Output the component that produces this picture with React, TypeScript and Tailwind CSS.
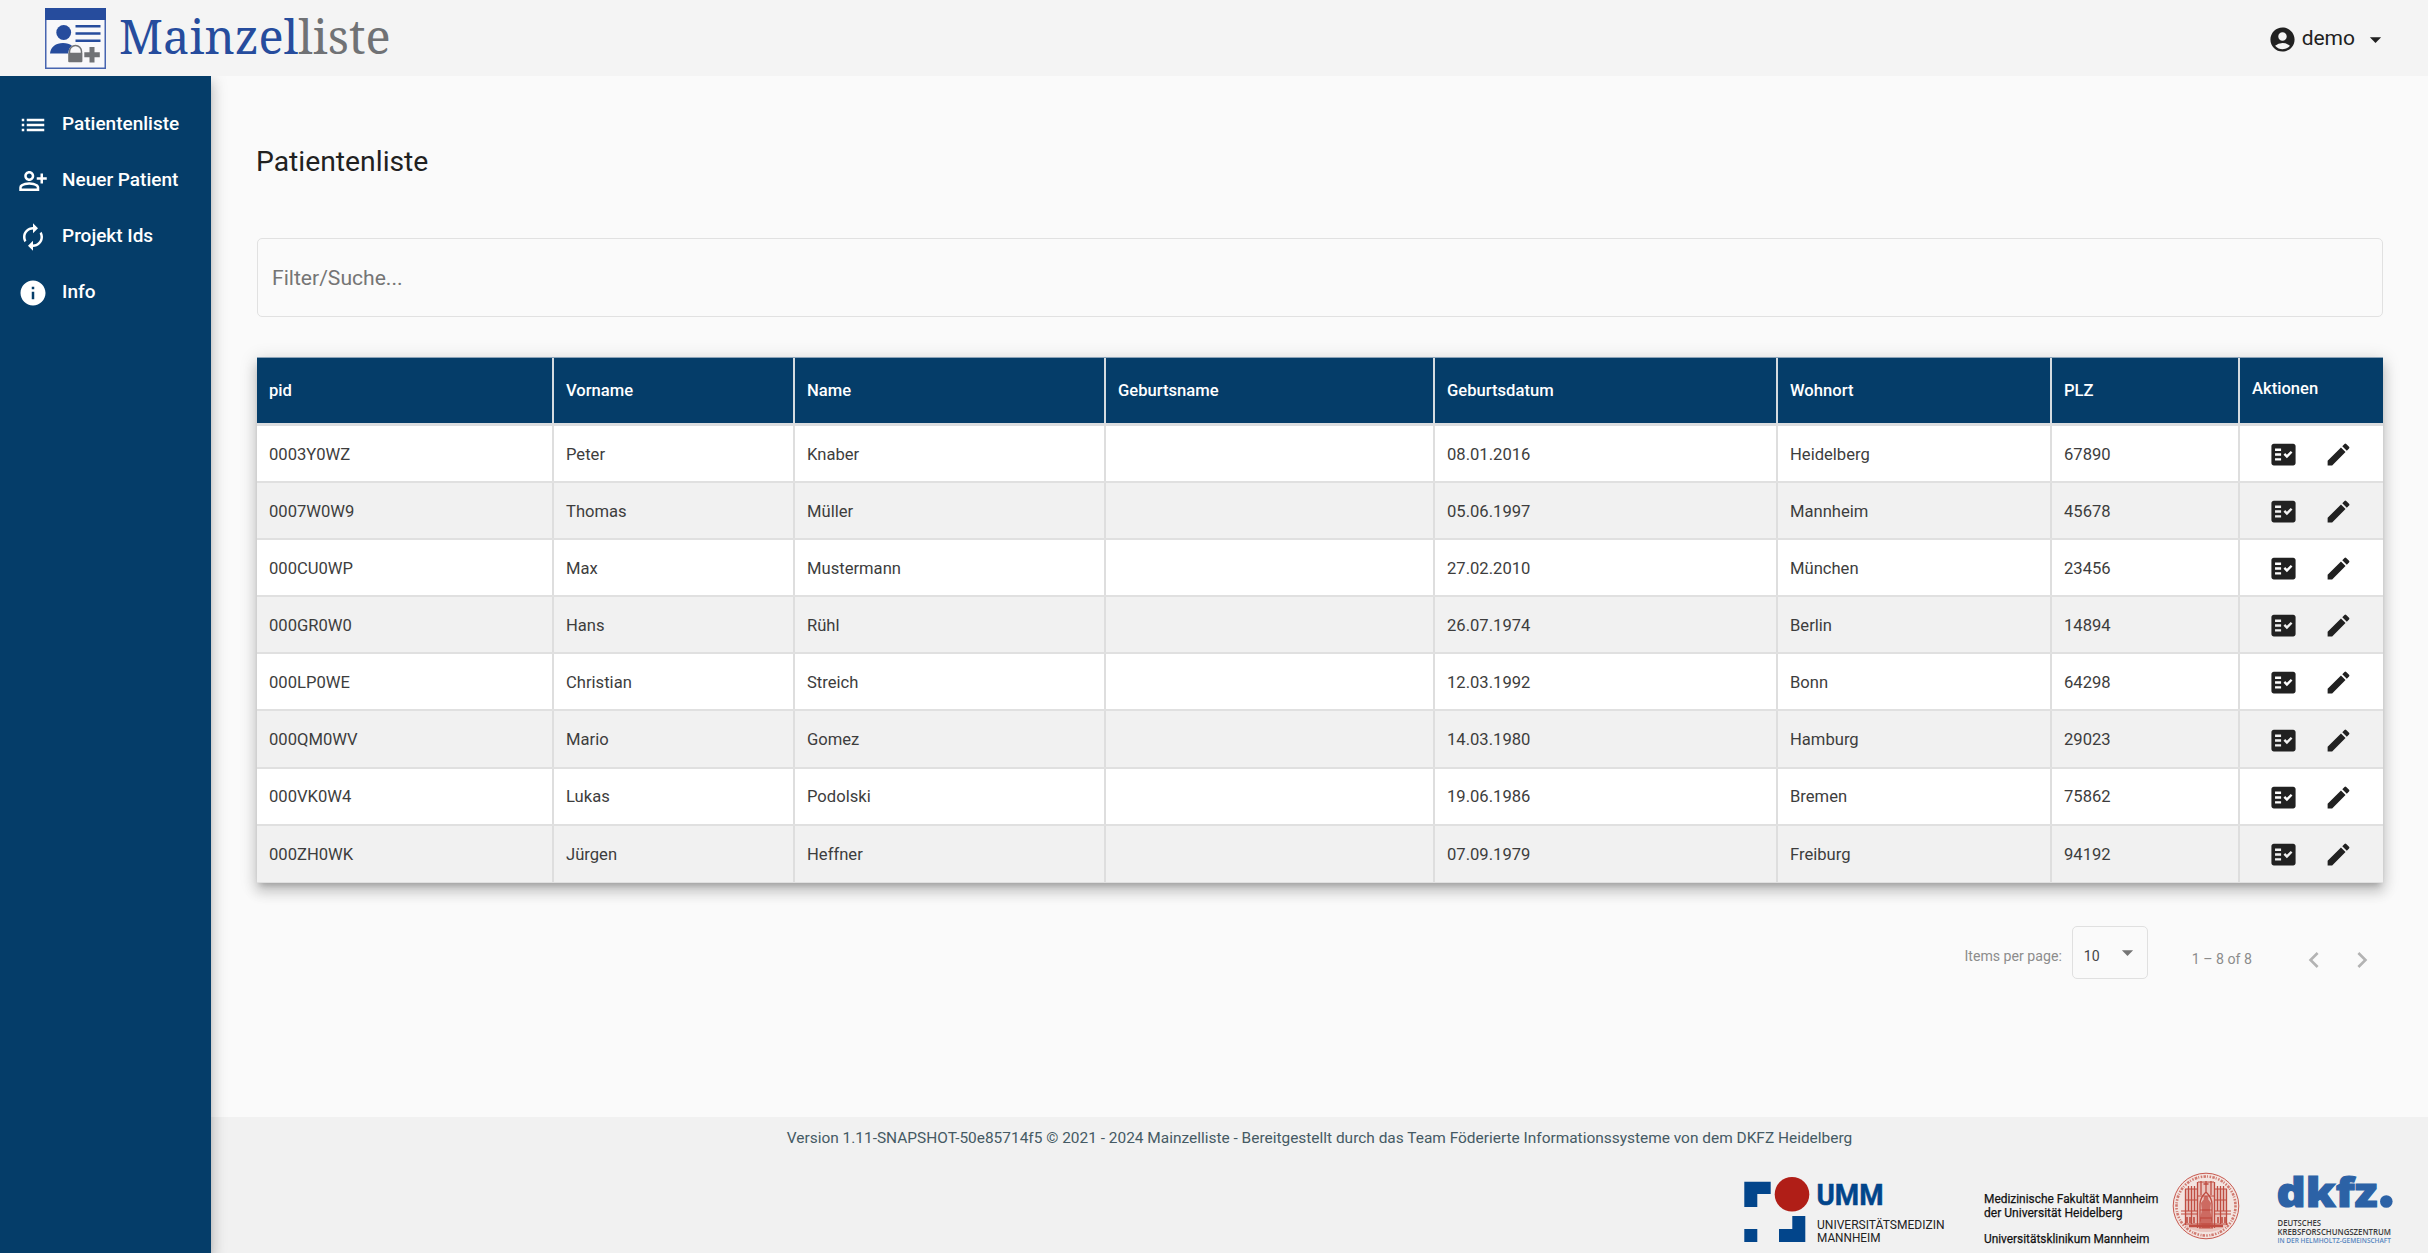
import React from 'react';
import {
  MdAccountCircle,
  MdArrowDropDown,
  MdAutorenew,
  MdChevronLeft,
  MdChevronRight,
  MdEdit,
  MdFactCheck,
  MdInfo,
  MdList,
  MdOutlinePersonAddAlt,
} from 'react-icons/md';

const navItems = [
  { label: 'Patientenliste', Icon: MdList },
  { label: 'Neuer Patient', Icon: MdOutlinePersonAddAlt },
  { label: 'Projekt Ids', Icon: MdAutorenew },
  { label: 'Info', Icon: MdInfo },
];

const columns = ['pid', 'Vorname', 'Name', 'Geburtsname', 'Geburtsdatum', 'Wohnort', 'PLZ'];

const patients = [
  ['0003Y0WZ', 'Peter', 'Knaber', '', '08.01.2016', 'Heidelberg', '67890'],
  ['0007W0W9', 'Thomas', 'Müller', '', '05.06.1997', 'Mannheim', '45678'],
  ['000CU0WP', 'Max', 'Mustermann', '', '27.02.2010', 'München', '23456'],
  ['000GR0W0', 'Hans', 'Rühl', '', '26.07.1974', 'Berlin', '14894'],
  ['000LP0WE', 'Christian', 'Streich', '', '12.03.1992', 'Bonn', '64298'],
  ['000QM0WV', 'Mario', 'Gomez', '', '14.03.1980', 'Hamburg', '29023'],
  ['000VK0W4', 'Lukas', 'Podolski', '', '19.06.1986', 'Bremen', '75862'],
  ['000ZH0WK', 'Jürgen', 'Heffner', '', '07.09.1979', 'Freiburg', '94192'],
];

const gridCols = 'grid grid-cols-[297px_241px_311px_329px_343px_274px_188px_143px]';

function LogoMark() {
  return (
    <svg viewBox="0 0 61 61" className="h-[61px] w-[61px]" aria-hidden="true">
      <rect x="0.75" y="0.75" width="59.5" height="59.5" fill="#f8f8fa" stroke="#4765b0" strokeWidth="1.5" />
      <rect width="61" height="12" fill="#264c9d" />
      <circle cx="18.7" cy="24.5" r="7.4" fill="#264c9d" />
      <path d="M5 45.5c.6-6.500 6-10.500 13-10.500 4 0 6.500 1 9 2.800-2.500 1.700-3.500 4-3.700 7.700z" fill="#264c9d" />
      <path d="M30.500 18.300h25M30.500 25.500h25M30.500 32.700h25" stroke="#264c9d" strokeWidth="2.500" />
      <path d="M24.500 45.500v-2a6 6 0 0 1 12 0v2" fill="none" stroke="#707275" strokeWidth="1.500" />
      <rect x="23.200" y="44.800" width="14.200" height="9.500" rx="1" fill="#707275" />
      <path d="M47 39v15.500M39.300 46.700h15.500" stroke="#707275" strokeWidth="5" />
    </svg>
  );
}

function UmmLogo() {
  return (
    <svg viewBox="0 0 206 70" className="h-[70px] w-[206px] shrink-0 overflow-visible" role="img" aria-label="UMM">
      <path d="M.3 6.700h26.400V19H13.300v13H.3zM.3 54h13v13H.3zM48.300 41h13v26H35V54h13.300z" fill="#02458b" />
      <circle cx="48" cy="19.300" r="17.300" fill="#b01e17" />
      <text x="72.500" y="30.300" fontSize="29" fontWeight="700" fill="#02458b" stroke="#02458b" strokeWidth="0.500" textLength="67" lengthAdjust="spacingAndGlyphs">UMM</text>
      <text x="73" y="54" fontSize="12.600" fill="#222" textLength="127.500" lengthAdjust="spacingAndGlyphs">UNIVERSITÄTSMEDIZIN</text>
      <text x="73" y="67" fontSize="12.600" fill="#222" textLength="63.500" lengthAdjust="spacingAndGlyphs">MANNHEIM</text>
    </svg>
  );
}

function FacultyText() {
  return (
    <svg viewBox="0 0 180 76" className="h-[76px] w-[180px] shrink-0 overflow-visible" role="img" aria-label="Fakultät">
      <g fontSize="13.2" fill="#111" stroke="#111" strokeWidth="0.250">
        <text x="0" y="27.500" textLength="174.500" lengthAdjust="spacingAndGlyphs">Medizinische Fakultät Mannheim</text>
        <text x="0" y="41.800" textLength="138.500" lengthAdjust="spacingAndGlyphs">der Universität Heidelberg</text>
        <text x="0" y="67.600" textLength="165.500" lengthAdjust="spacingAndGlyphs">Universitätsklinikum Mannheim</text>
      </g>
    </svg>
  );
}

function Seal() {
  return (
    <svg viewBox="0 0 68 68" className="h-[68px] w-[68px] shrink-0" aria-hidden="true">
      <circle cx="34" cy="34" r="32.800" fill="#f3e4e0" stroke="#c2473c" strokeWidth="0.900" />
      <circle cx="34" cy="34" r="29.500" fill="none" stroke="#d07a70" strokeWidth="2.600" strokeDasharray="1.500 1.300 2.500 1 1 1.600" />
      <path d="M13 17h13v-7h16v7h13v37q-9 6-21 6t-21-6z" fill="#eac4be" />
      <g stroke="#bf4c41" fill="none">
        <path d="M13.500 17v36M16.500 14v25M19.500 14v38M22.500 14v25M25.500 10v46M29 9v14M39 9v14M42.500 10v46M45.500 14v25M48.500 14v38M51.500 14v25M54.500 17v36" strokeWidth="1.300" />
        <path d="M13 17h13M42 17h13M26 10h16M13 28h13M42 28h13M9 39h17M42 39h17M9 42h17M42 42h17M12 52h44M26 24h16M27 56h14" strokeWidth="1.200" />
        <path d="M15 45v6M18 45v6M22 45v6M46 45v6M50 45v6M53 45v6" strokeWidth="1.600" />
        <path d="M28 56V32c0-5 2-8 6-12 4 4 6 7 6 12v24M34 9v11M31.500 12h5" strokeWidth="1.300" />
        <path d="M28 38h12M28 46h12" strokeWidth="1" />
      </g>
      <path d="M34 24c2 0 2.700 1.500 2.200 3.200l2.800 3.800-.8 7 1.800 10-2 8h-8l-2-8 1.800-10-.8-7 2.800-3.800C31.300 25.500 32 24 34 24z" fill="#bd3a2f" fillOpacity="0.650" />
      <path d="M17 54h34" stroke="#bf4c41" strokeWidth="2.500" />
    </svg>
  );
}

function DkfzLogo() {
  return (
    <svg viewBox="0 0 120 82" className="h-[82px] w-[120px] shrink-0 overflow-visible font-['Open_Sans',sans-serif]" role="img" aria-label="dkfz">
      <text x="-0.500" y="34.200" fontSize="41.500" fontWeight="800" fill="#2c62a6" stroke="#2c62a6" strokeWidth="1.200" textLength="101" lengthAdjust="spacingAndGlyphs">dkfz</text>
      <circle cx="109.300" cy="28.500" r="6.300" fill="#2c62a6" />
      <g fontSize="8.600" fontWeight="600">
        <text x="0.500" y="52.500" fill="#3c3c3c" textLength="43.500" lengthAdjust="spacingAndGlyphs">DEUTSCHES</text>
        <text x="0.500" y="61.500" fill="#3c3c3c" textLength="113.500" lengthAdjust="spacingAndGlyphs">KREBSFORSCHUNGSZENTRUM</text>
        <text x="0.500" y="69.800" fontSize="7.800" fill="#5585bf" textLength="113.500" lengthAdjust="spacingAndGlyphs">IN DER HELMHOLTZ-GEMEINSCHAFT</text>
      </g>
    </svg>
  );
}

function PatientTable() {
  return (
    <div
      role="table"
      className="w-[2126px] text-[16.6px] shadow-[0_5px_6px_-3px_rgba(0,0,0,0.2),0_9px_12px_1px_rgba(0,0,0,0.14),0_3px_16px_2px_rgba(0,0,0,0.12)]"
    >
      <div role="row" className={`${gridCols} h-[69px] border-t border-b-[3px] border-t-[#8ba3b8] border-b-[#dcdddf] bg-[#053d69] font-medium text-white`}>
        {columns.map((name) => (
          <div key={name} role="columnheader" className="flex items-center border-r-2 border-[#d5dbe0] pl-3 pt-0.5">
            {name}
          </div>
        ))}
        <div role="columnheader" className="flex items-center pb-[3px] pl-3">Aktionen</div>
      </div>
      {patients.map((row) => (
        <div
          key={row[0]}
          role="row"
          className={`${gridCols} h-[57.1px] border-b-2 border-[#e0e0e0] text-[#3d3d3d] last:border-b even:bg-white odd:bg-[#f1f1f1]`}
        >
          {row.map((value, i) => (
            <div key={i} role="cell" className="flex items-center border-r-2 border-[#dedede] pl-3 pt-[3px]">
              {value}
            </div>
          ))}
          <div role="cell" className="flex items-center gap-[26px] pl-[29px] pt-[2px] text-[#212121]">
            <MdFactCheck className="size-[29px]" />
            <MdEdit className="size-[29px]" />
          </div>
        </div>
      ))}
    </div>
  );
}

function Paginator() {
  return (
    <div className="mt-[43px] flex h-[53px] w-[2126px] items-start justify-end text-[14.15px] text-[#8c8c8c]">
      <span className="mr-[10px] mt-[20px] leading-5">Items per page:</span>
      <div className="flex h-[53px] w-[76px] items-center justify-between rounded-[5px] border border-[#e0e0e0] pl-[11px] pr-[6px] text-[#454545]">
        <span className="pt-[8px]">10</span>
        <MdArrowDropDown className="size-[27px] text-[#757575]" />
      </div>
      <span className="ml-[44px] mt-[23px] leading-5">1 – 8 of 8</span>
      <div className="ml-[46px] mt-[18px] flex gap-4 text-[#b3b3b3]">
        <MdChevronLeft className="size-8" />
        <MdChevronRight className="size-8" />
      </div>
      <div className="w-[5px]" />
    </div>
  );
}

export default function App() {
  return (
    <div className="flex h-[1253px] w-[2428px] flex-col overflow-hidden bg-[#fafafa] font-['Roboto',sans-serif] text-[#212121]">
      <header className="relative z-20 flex h-[76px] shrink-0 items-center bg-[#f4f4f4] pl-[45px]">
        <LogoMark />
        <span className="ml-[13px] whitespace-nowrap pb-1 font-['Noto_Serif',serif] text-[46.9px] leading-[60px] text-[#264c9d]">
          Mainzel<span className="text-[#707275]">liste</span>
        </span>
        <div className="ml-auto flex items-center pr-[39px]">
          <MdAccountCircle className="mt-[3px] size-[29px]" />
          <span className="ml-[5px] text-[21px] leading-7">demo</span>
          <MdArrowDropDown className="ml-[7px] mt-[3px] size-[27px]" />
        </div>
      </header>

      <div className="flex min-h-0 flex-1">
        <nav className="z-10 flex w-[211px] shrink-0 flex-col bg-[#053d69] pt-5 text-white shadow-[0_5px_6px_-3px_rgba(0,0,0,0.2),0_9px_12px_1px_rgba(0,0,0,0.14),0_3px_16px_2px_rgba(0,0,0,0.12)]">
          {navItems.map(({ label, Icon }) => (
            <a key={label} className="flex h-14 items-center pl-[18px]">
              <Icon className="mt-px size-[30px]" />
              <span className="ml-[14px] mt-px text-[19px] font-medium">{label}</span>
            </a>
          ))}
        </nav>

        <div className="flex min-w-0 flex-1 flex-col">
          <main className="flex flex-1 flex-col pl-[46px]">
            <h1 className="-ml-px mt-[68px] text-[28.3px] leading-9">Patientenliste</h1>
            <div className="mt-[58px] flex h-[79px] w-[2126px] items-center rounded-[5px] border border-[#e1e1e1] pl-[14px] text-[21.1px] text-[#757575]">
              <span>Filter/Suche...</span>
            </div>
            <div className="mt-[40px]">
              <PatientTable />
            </div>
            <Paginator />
          </main>

          <footer className="h-[136px] shrink-0 bg-[#f1f1f1]">
            <p className="pt-[11px] text-center text-[15.44px] leading-5 text-[#455a64]">
              Version 1.11-SNAPSHOT-50e85714f5 © 2021 - 2024 Mainzelliste - Bereitgestellt durch das Team Föderierte
              Informationssysteme von dem DKFZ Heidelberg
            </p>
            <div className="flex items-start justify-end pr-[31px] pt-[27px]">
              <UmmLogo />
              <div className="ml-[34px]"><FacultyText /></div>
              <div className="ml-[8px] -mt-[3px]"><Seal /></div>
              <div className="ml-[37px] -mt-[2px]"><DkfzLogo /></div>
            </div>
          </footer>
        </div>
      </div>
    </div>
  );
}
